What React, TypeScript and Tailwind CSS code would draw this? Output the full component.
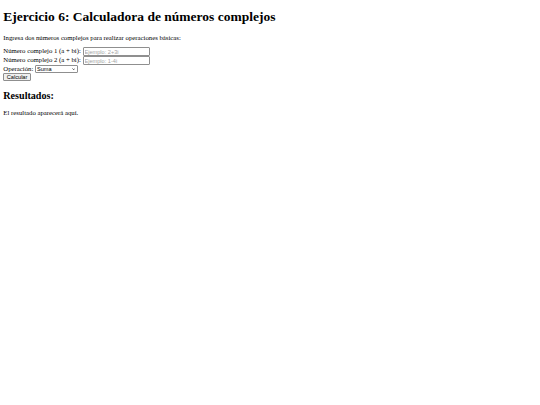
import { useState } from "react"

const controlFont = "font-['Liberation_Sans',Arial,sans-serif] text-[5.6px] leading-[normal]"

export default function App() {
    const [a, setA] = useState("")
    const [b, setB] = useState("")
    const [op, setOp] = useState("suma")

    return (
        <div className="min-h-[405px] bg-white px-[3.33px] py-px text-black font-['Liberation_Serif','Times_New_Roman',serif] text-[6.75px] leading-[normal]">
            <h1 className="mt-[7.9px] mb-[8.9px] text-[13.5px] font-bold leading-[normal]">
                Ejercicio 6: Calculadora de números complejos
            </h1>
            <p className="my-[6.7px]">Ingresa dos números complejos para realizar operaciones básicas:</p>

            <form onSubmit={(e) => e.preventDefault()}>
                <label>Número complejo 1 (a + bi): </label>
                <input
                    value={a}
                    onChange={(e) => setA(e.target.value)}
                    placeholder="Ejemplo: 2+3i"
                    className={`w-[67px] h-[8.9px] align-baseline border border-[#8f8f8f] rounded-[1px] px-[1px] placeholder:text-[#a3a3a3] ${controlFont}`}
                />
                <br />
                <label>Número complejo 2 (a + bi): </label>
                <input
                    value={b}
                    onChange={(e) => setB(e.target.value)}
                    placeholder="Ejemplo: 1-4i"
                    className={`w-[67px] h-[8.9px] align-baseline border border-[#8f8f8f] rounded-[1px] px-[1px] placeholder:text-[#a3a3a3] ${controlFont}`}
                />
                <br />
                <label>Operación: </label>
                <span className="relative inline-block align-baseline">
                    <select
                        value={op}
                        onChange={(e) => setOp(e.target.value)}
                        className={`appearance-none w-[43px] h-[7.8px] align-baseline border border-[#8f8f8f] rounded-[1px] pl-[1px] ${controlFont}`}
                    >
                        <option value="suma">Suma</option>
                        <option value="resta">Resta</option>
                        <option value="multiplicacion">Multiplicación</option>
                        <option value="division">División</option>
                    </select>
                    <svg
                        viewBox="0 0 8 5"
                        className="pointer-events-none absolute right-[3px] top-[2.8px] w-[3.4px] h-[2.2px]"
                    >
                        <path d="M1 1l3 3 3-3" fill="none" stroke="#111" strokeWidth="1.6" />
                    </svg>
                </span>
                <br />
                <button
                    type="submit"
                    className={`h-[8.3px] px-[2.5px] align-baseline bg-[#efefef] border border-[#8f8f8f] rounded-[1px] ${controlFont}`}
                >
                    Calcular
                </button>
            </form>

            <div>
                <h2 className="my-[8.3px] text-[10.1px] font-bold leading-[normal]">Resultados:</h2>
                <p className="my-[6.7px]">El resultado aparecerá aquí.</p>
            </div>
        </div>
    )
}
